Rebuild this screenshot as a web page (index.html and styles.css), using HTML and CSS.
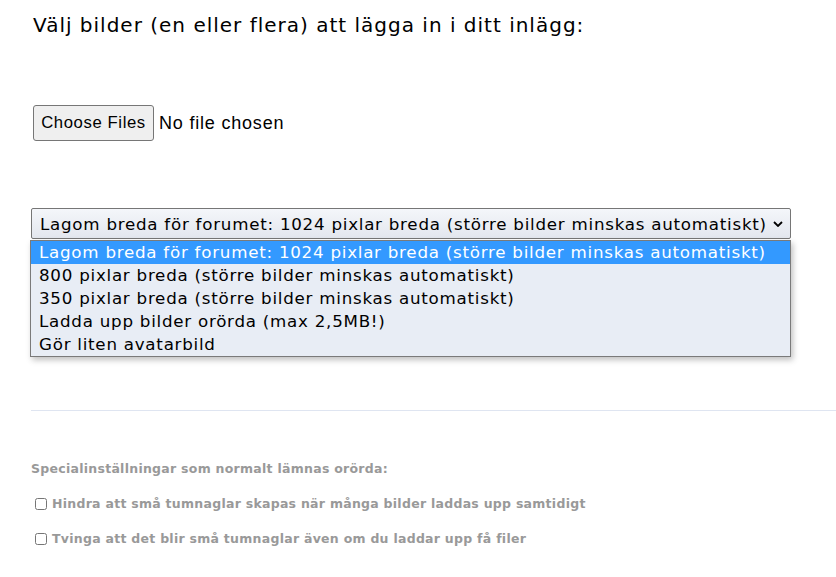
FILE: index.html
```html
<!DOCTYPE html>
<html lang="sv">
  <head>
    <meta charset="UTF-8">
    <title>Ladda upp bilder</title>
    <link rel="stylesheet" href="styles.css">
  </head>
  <body>
    <div class="upload">
      <h1 class="upload-title">Välj bilder (en eller flera) att lägga in i ditt inlägg:</h1>

      <div class="file-row">
        <button type="button" class="file-button">Choose Files</button>
        <span class="file-status">No file chosen</span>
      </div>

      <!-- Open size dropdown -->
      <div class="size-select">
        <div class="size-current">
          <span>Lagom breda för forumet: 1024 pixlar breda (större bilder minskas automatiskt)</span>
          <svg class="size-arrow" width="10" height="6" viewBox="0 0 10 6"><path d="M1 1l4 4 4-4" fill="none" stroke="#000" stroke-width="1.8"/></svg>
        </div>
        <ul class="size-list">
          <li class="selected">Lagom breda för forumet: 1024 pixlar breda (större bilder minskas automatiskt)</li>
          <li>800 pixlar breda (större bilder minskas automatiskt)</li>
          <li>350 pixlar breda (större bilder minskas automatiskt)</li>
          <li>Ladda upp bilder orörda (max 2,5MB!)</li>
          <li>Gör liten avatarbild</li>
        </ul>
      </div>
    </div>

    <hr class="divider">

    <div class="special">
      <p class="special-title">Specialinställningar som normalt lämnas orörda:</p>
      <label class="special-option"><input type="checkbox"> Hindra att små tumnaglar skapas när många bilder laddas upp samtidigt</label>
      <label class="special-option"><input type="checkbox"> Tvinga att det blir små tumnaglar även om du laddar upp få filer</label>
    </div>
  </body>
</html>
```

FILE: styles.css
```css
body {
    margin: 0;
    font-family: "DejaVu Sans", Verdana, sans-serif;
    color: #000;
    background: #fff;
}
.upload {
    padding: 12px 0 0 31px;
}
.upload-title {
    margin: 0 0 0 2px;
    font-size: 20px;
    font-weight: normal;
    line-height: 26px;
    letter-spacing: 1px;
}
.file-row {
    display: flex;
    align-items: center;
    margin-top: 67px;
    margin-left: 2px;
    font-family: "Liberation Sans", Arial, sans-serif;
}
.file-button {
    width: 121px;
    height: 36px;
    padding: 0;
    font-family: inherit;
    font-size: 16.7px;
    letter-spacing: 0.6px;
    color: #000;
    background: #efefef;
    border: 1px solid #767676;
    border-radius: 3px;
}
.file-status {
    margin-left: 5px;
    font-size: 18px;
    letter-spacing: 0.8px;
}
.size-select {
    margin-top: 67px;
    width: 760px;
    font-size: 16.7px;
    letter-spacing: 0.75px;
}
.size-current {
    display: flex;
    align-items: center;
    justify-content: space-between;
    height: 29px;
    padding: 0 7px 0 8px;
    background: linear-gradient(#f4f6fa, #e3e7ee);
    border: 1px solid #767676;
    border-radius: 2px;
}
.size-arrow {
    flex: none;
}
.size-list {
    margin: 1px 0 0 -1px;
    padding: 0;
    list-style: none;
    background: #e8edf5;
    border: 1px solid #7a7a7a;
    box-shadow: 2px 3px 6px rgba(0, 0, 0, 0.25);
}
.size-list li {
    height: 23px;
    line-height: 23px;
    padding-left: 8px;
    white-space: nowrap;
}
.size-list .selected {
    background: #3399ff;
    color: #fff;
}
.divider {
    margin: 53px 0 0 31px;
    border: none;
    border-top: 1px solid #dfe5f1;
}
.special {
    padding: 50px 0 0 31px;
    color: #999;
    font-size: 12.5px;
    font-weight: bold;
    letter-spacing: 0.27px;
}
.special-title {
    margin: 0 0 20px;
}
.special-option {
    display: flex;
    align-items: center;
    margin: 0 0 20px 4px;
}
.special-option input {
    margin: 0 5px 0 0;
    width: 12px;
    height: 12px;
}
```
